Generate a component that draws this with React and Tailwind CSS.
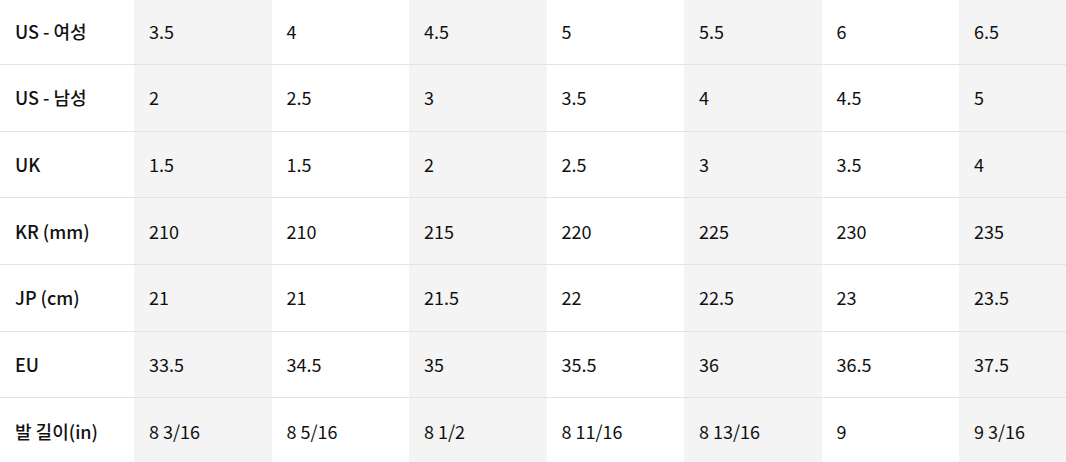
import React from 'react';

const rows = [
  { label: 'US - 여성', values: ['3.5', '4', '4.5', '5', '5.5', '6', '6.5'] },
  { label: 'US - 남성', values: ['2', '2.5', '3', '3.5', '4', '4.5', '5'] },
  { label: 'UK', values: ['1.5', '1.5', '2', '2.5', '3', '3.5', '4'] },
  { label: 'KR (mm)', values: ['210', '210', '215', '220', '225', '230', '235'] },
  { label: 'JP (cm)', values: ['21', '21', '21.5', '22', '22.5', '23', '23.5'] },
  { label: 'EU', values: ['33.5', '34.5', '35', '35.5', '36', '36.5', '37.5'] },
  { label: '발 길이(in)', values: ['8 3/16', '8 5/16', '8 1/2', '8 11/16', '8 13/16', '9', '9 3/16'] },
];

function App() {
  return (
    <div className="w-[1066px] h-[462px] overflow-hidden bg-white text-[#111] font-['Noto_Sans_CJK_KR','Noto_Sans',sans-serif] text-[18px]">
      <div className="flex flex-col -mt-[1.67px]">
        {rows.map((row) => (
          <div className="flex h-[66.67px] shrink-0" key={row.label}>
            <div className="w-[134px] shrink-0 flex items-center pl-[15px] border-b border-[#e3e3e3] font-medium">
              {row.label}
            </div>
            {row.values.map((v, i) => (
              <div
                key={i}
                className={`w-[137.5px] shrink-0 flex items-center pl-[15px] border-b border-[#e3e3e3] ${i % 2 === 0 ? 'bg-[#f4f4f4]' : 'bg-white'}`}
              >
                {v}
              </div>
            ))}
          </div>
        ))}
      </div>
    </div>
  );
}

export default App;
